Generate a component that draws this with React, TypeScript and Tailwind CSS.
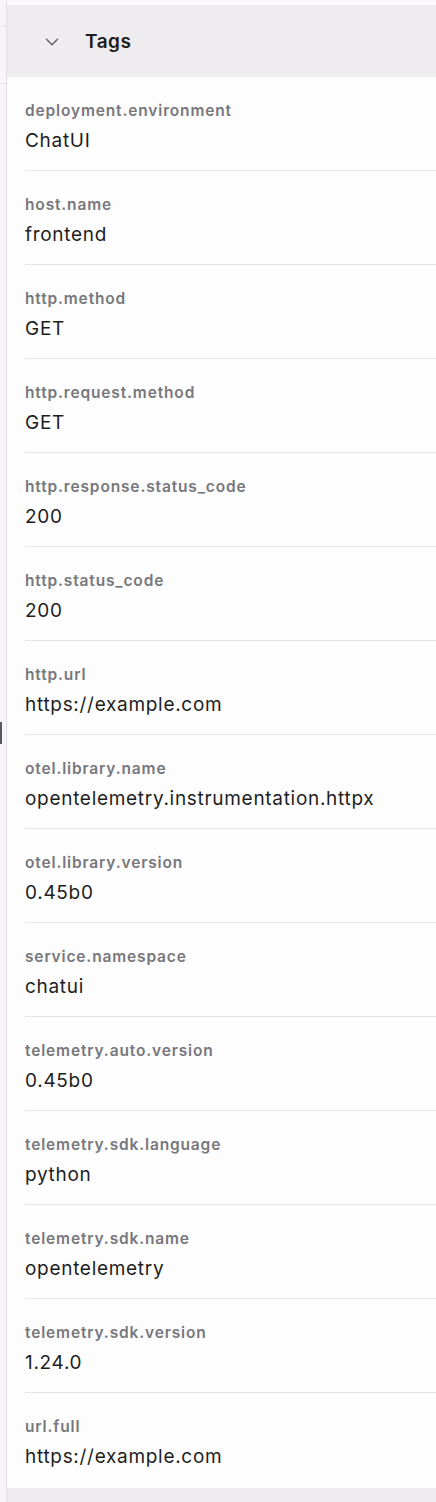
import React from 'react';
import { ChevronDown } from 'lucide-react';

const TAGS: { key: string; value: string }[] = [
  { key: 'deployment.environment', value: 'ChatUI' },
  { key: 'host.name', value: 'frontend' },
  { key: 'http.method', value: 'GET' },
  { key: 'http.request.method', value: 'GET' },
  { key: 'http.response.status_code', value: '200' },
  { key: 'http.status_code', value: '200' },
  { key: 'http.url', value: 'https://example.com' },
  { key: 'otel.library.name', value: 'opentelemetry.instrumentation.httpx' },
  { key: 'otel.library.version', value: '0.45b0' },
  { key: 'service.namespace', value: 'chatui' },
  { key: 'telemetry.auto.version', value: '0.45b0' },
  { key: 'telemetry.sdk.language', value: 'python' },
  { key: 'telemetry.sdk.name', value: 'opentelemetry' },
  { key: 'telemetry.sdk.version', value: '1.24.0' },
  { key: 'url.full', value: 'https://example.com' },
];

export default function App() {
  return (
    <div className="flex w-[436px] h-[1502px] overflow-hidden bg-[#fdfdfd] font-['Inter',sans-serif]">
      {/* edge of the neighbouring pane */}
      <div className="w-[7px] shrink-0 bg-[#f7f5f8] border-r border-[#e2dfe4] flex flex-col">
        <div className="h-[27px] border-b border-[#e6e4e8]" />
        <div className="h-[57px] border-b border-[#e6e4e8]" />
        <div className="h-[638px]" />
        <div className="w-[2px] h-[22px] bg-[#5a5a5e]" />
      </div>

      <div className="flex-1 flex flex-col">
        <div className="h-[5px] bg-[#faf8fb]" />
        <div className="h-[72px] bg-[#eeecef] flex items-center pl-[34px] pt-[2px] gap-[22px]">
          <ChevronDown size={22} strokeWidth={1.5} className="text-[#5f5f64]" />
          <span className="text-[19px] tracking-[0.5px] font-semibold text-[#1d1d1f]">Tags</span>
        </div>

        <div className="flex-1 flex flex-col pl-[18px]">
          {TAGS.map((t, i) => (
            <div
              key={t.key}
              className={
                i < TAGS.length - 1
                  ? 'pt-[24px] pb-[16px] border-b border-[#e5e5e7]'
                  : 'pt-[24px] pb-[18px]'
              }
            >
              <div className="text-[15.5px] tracking-[0.85px] leading-[20px] font-semibold text-[#77777c]">
                {t.key}
              </div>
              <div className="mt-[7px] text-[19px] tracking-[0.7px] leading-[26px] text-[#1d1d1f]">
                {t.value}
              </div>
            </div>
          ))}
        </div>

        <div className="h-[14px] bg-[#eeecef]" />
      </div>
    </div>
  );
}
